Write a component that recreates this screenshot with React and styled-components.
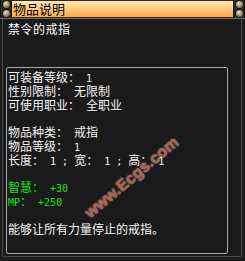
import React from 'react';
import styled, { createGlobalStyle } from 'styled-components';

const GlobalStyle = createGlobalStyle`
  html, body {
    margin: 0;
    padding: 0;
    background: #1a1a1a;
  }
`;

const lines = [
  { text: '可装备等级： 1' },
  { text: '性别限制： 无限制' },
  { text: '可使用职业： 全职业' },
  { blank: true },
  { text: '物品种类： 戒指' },
  { text: '物品等级： 1' },
  { text: '长度： 1 ; 宽： 1 ; 高： 1' },
  { blank: true },
  { text: '智慧： +30', green: true },
  { text: 'MP： +250', green: true },
  { blank: true },
  { text: '能够让所有力量停止的戒指。' },
];

// split a line into runs of half-width (ascii) and full-width characters
const splitRuns = (text) => text.match(/[\x20-\x7e]+|[^\x20-\x7e]+/g) || [];

const App = () => {
  return (
    <>
      <GlobalStyle />
      <Window>
        <TitleBar>
          <KnobColumn>
            <Knob />
            <Knob />
          </KnobColumn>
          <TitleText>物品说明</TitleText>
          <KnobColumn>
            <Knob />
            <Knob />
          </KnobColumn>
        </TitleBar>
        <Frame>
          <ItemName>禁令的戒指</ItemName>
          <InfoBox>
            {lines.map((line, i) =>
              line.blank ? (
                <Blank key={i} />
              ) : (
                <InfoLine key={i} $green={line.green}>
                  {splitRuns(line.text).map((run, j) =>
                    /^[\x20-\x7e]+$/.test(run) ? <Half key={j}>{run}</Half> : <span key={j}>{run}</span>
                  )}
                </InfoLine>
              )
            )}
          </InfoBox>
          <Watermark>www.Ecgs.com</Watermark>
        </Frame>
      </Window>
    </>
  );
};

const Window = styled.div`
  position: relative;
  width: 245px;
  height: 261px;
  background: #1c1c1c;
  box-sizing: border-box;
  font-family: "Noto Sans CJK SC", "DejaVu Sans", sans-serif;
  overflow: hidden;
`;

const TitleBar = styled.div`
  display: flex;
  height: 18px;
  background: #2a2a2a;
  border-bottom: 1px solid #6a6a6a;
`;

const KnobColumn = styled.div`
  width: 10px;
  display: flex;
  flex-direction: column;
  align-items: center;
  justify-content: space-around;
  background: #2c2c2c;
  border-left: 1px solid #111;
  border-right: 1px solid #111;
`;

const Knob = styled.div`
  width: 7px;
  height: 7px;
  border-radius: 50%;
  background: radial-gradient(circle at 40% 35%, #e8e0c0 0%, #a89870 45%, #4a4030 100%);
  box-shadow: 0 0 0 1px #151515;
`;

const TitleText = styled.div`
  flex: 1;
  margin: 1px 0;
  padding-left: 1px;
  background: linear-gradient(#ffe8b8, #ffc878 55%, #ffa848);
  color: #000;
  font-size: 13px;
  line-height: 16px;
`;

const Frame = styled.div`
  position: relative;
  margin: 0 3px 4px 2px;
  height: 238px;
  border-left: 1px solid #4a4a4a;
  border-right: 1px solid #4a4a4a;
  border-bottom: 1px solid #4a4a4a;
  border-radius: 0 0 2px 2px;
  background: #1a1a1a;
  box-sizing: border-box;
  padding: 3px 13px 0 3px;
`;

const ItemName = styled.div`
  color: #fff;
  font-size: 12px;
  line-height: 14px;
  padding-left: 2px;
  height: 45px;
  letter-spacing: 0.5px;
`;

const InfoBox = styled.div`
  border: 1px solid #a8a8a8;
  border-radius: 2px;
  height: 187px;
  box-sizing: border-box;
  padding: 2px 0 0 1px;
`;

const InfoLine = styled.div`
  color: ${(p) => (p.$green ? '#10e810' : '#f4f4f4')};
  font-size: 12px;
  height: 13.8px;
  line-height: 13.8px;
  white-space: pre;
  overflow: visible;
`;

const Half = styled.span`
  font-family: "DejaVu Sans Mono", "Liberation Mono", monospace;
  font-size: 10px;
  line-height: 1;
`;

const Blank = styled.div`
  height: 13.8px;
`;

const Watermark = styled.div`
  position: absolute;
  left: 84px;
  top: 188px;
  transform: rotate(-40deg);
  transform-origin: left center;
  font-family: "Liberation Sans", Arial, sans-serif;
  font-size: 16px;
  font-weight: bold;
  line-height: 16px;
  color: rgba(180, 75, 45, 0.8);
  text-shadow: 0 0 2px rgba(255, 255, 255, 0.45), 0 0 1px rgba(255, 255, 255, 0.5);
  pointer-events: none;
`;

export default App;
